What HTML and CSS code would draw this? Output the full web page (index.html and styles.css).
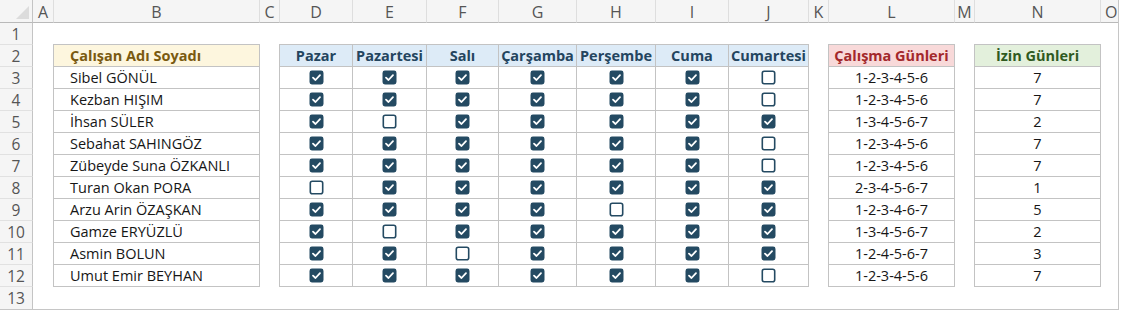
FILE: index.html
```html
<!DOCTYPE html>
<html lang="tr">
<head>
<meta charset="utf-8">
<title>Çalışma Günleri</title>
<link rel="stylesheet" href="styles.css">
</head>
<body>
<svg class="defs" width="0" height="0" aria-hidden="true">
  <symbol id="on" viewBox="0 0 15 15">
    <rect x="0.5" y="0.5" width="14" height="14" rx="2.4" fill="#244a62"/>
    <path d="M4 7.7 L6.5 10 L11 5.2" fill="none" stroke="#fff" stroke-width="1.8" stroke-linecap="round" stroke-linejoin="round"/>
  </symbol>
  <symbol id="off" viewBox="0 0 15 15">
    <rect x="1.3" y="1.3" width="12.4" height="12.4" rx="2" fill="#fff" stroke="#244a62" stroke-width="1.6"/>
  </symbol>
</svg>
<div class="sheet">
  <div class="corner"><span class="tri"></span></div>
  <div class="colh">A</div><div class="colh">B</div><div class="colh">C</div><div class="colh">D</div><div class="colh">E</div><div class="colh">F</div><div class="colh">G</div><div class="colh">H</div><div class="colh">I</div><div class="colh">J</div><div class="colh">K</div><div class="colh">L</div><div class="colh">M</div><div class="colh">N</div><div class="colh last">O</div>

  <div class="rowh r1">1</div><div class="rowh r2">2</div><div class="rowh r3">3</div><div class="rowh r4">4</div><div class="rowh r5">5</div><div class="rowh r6">6</div><div class="rowh r7">7</div><div class="rowh r8">8</div><div class="rowh r9">9</div><div class="rowh r10">10</div><div class="rowh r11">11</div><div class="rowh r12">12</div><div class="rowh r13">13</div>

  <table class="tbl t-names">
    <tr><th class="h-names">Çalışan Adı Soyadı</th></tr>
    <tr><td>Sibel GÖNÜL</td></tr>
    <tr><td>Kezban HIŞIM</td></tr>
    <tr><td>İhsan SÜLER</td></tr>
    <tr><td>Sebahat SAHINGÖZ</td></tr>
    <tr><td>Zübeyde Suna ÖZKANLI</td></tr>
    <tr><td>Turan Okan PORA</td></tr>
    <tr><td>Arzu Arin ÖZAŞKAN</td></tr>
    <tr><td>Gamze ERYÜZLÜ</td></tr>
    <tr><td>Asmin BOLUN</td></tr>
    <tr><td>Umut Emir BEYHAN</td></tr>
  </table>

  <table class="tbl t-days">
    <colgroup><col class="c73"><col class="c74"><col class="c72"><col class="c78"><col class="c79"><col class="c73"><col class="c80"></colgroup>
    <tr class="h-days"><th>Pazar</th><th>Pazartesi</th><th>Salı</th><th>Çarşamba</th><th>Perşembe</th><th>Cuma</th><th>Cumartesi</th></tr>
    <tr><td><svg class="cb"><use href="#on"/></svg></td><td><svg class="cb"><use href="#on"/></svg></td><td><svg class="cb"><use href="#on"/></svg></td><td><svg class="cb"><use href="#on"/></svg></td><td><svg class="cb"><use href="#on"/></svg></td><td><svg class="cb"><use href="#on"/></svg></td><td><svg class="cb"><use href="#off"/></svg></td></tr>
    <tr><td><svg class="cb"><use href="#on"/></svg></td><td><svg class="cb"><use href="#on"/></svg></td><td><svg class="cb"><use href="#on"/></svg></td><td><svg class="cb"><use href="#on"/></svg></td><td><svg class="cb"><use href="#on"/></svg></td><td><svg class="cb"><use href="#on"/></svg></td><td><svg class="cb"><use href="#off"/></svg></td></tr>
    <tr><td><svg class="cb"><use href="#on"/></svg></td><td><svg class="cb"><use href="#off"/></svg></td><td><svg class="cb"><use href="#on"/></svg></td><td><svg class="cb"><use href="#on"/></svg></td><td><svg class="cb"><use href="#on"/></svg></td><td><svg class="cb"><use href="#on"/></svg></td><td><svg class="cb"><use href="#on"/></svg></td></tr>
    <tr><td><svg class="cb"><use href="#on"/></svg></td><td><svg class="cb"><use href="#on"/></svg></td><td><svg class="cb"><use href="#on"/></svg></td><td><svg class="cb"><use href="#on"/></svg></td><td><svg class="cb"><use href="#on"/></svg></td><td><svg class="cb"><use href="#on"/></svg></td><td><svg class="cb"><use href="#off"/></svg></td></tr>
    <tr><td><svg class="cb"><use href="#on"/></svg></td><td><svg class="cb"><use href="#on"/></svg></td><td><svg class="cb"><use href="#on"/></svg></td><td><svg class="cb"><use href="#on"/></svg></td><td><svg class="cb"><use href="#on"/></svg></td><td><svg class="cb"><use href="#on"/></svg></td><td><svg class="cb"><use href="#off"/></svg></td></tr>
    <tr><td><svg class="cb"><use href="#off"/></svg></td><td><svg class="cb"><use href="#on"/></svg></td><td><svg class="cb"><use href="#on"/></svg></td><td><svg class="cb"><use href="#on"/></svg></td><td><svg class="cb"><use href="#on"/></svg></td><td><svg class="cb"><use href="#on"/></svg></td><td><svg class="cb"><use href="#on"/></svg></td></tr>
    <tr><td><svg class="cb"><use href="#on"/></svg></td><td><svg class="cb"><use href="#on"/></svg></td><td><svg class="cb"><use href="#on"/></svg></td><td><svg class="cb"><use href="#on"/></svg></td><td><svg class="cb"><use href="#off"/></svg></td><td><svg class="cb"><use href="#on"/></svg></td><td><svg class="cb"><use href="#on"/></svg></td></tr>
    <tr><td><svg class="cb"><use href="#on"/></svg></td><td><svg class="cb"><use href="#off"/></svg></td><td><svg class="cb"><use href="#on"/></svg></td><td><svg class="cb"><use href="#on"/></svg></td><td><svg class="cb"><use href="#on"/></svg></td><td><svg class="cb"><use href="#on"/></svg></td><td><svg class="cb"><use href="#on"/></svg></td></tr>
    <tr><td><svg class="cb"><use href="#on"/></svg></td><td><svg class="cb"><use href="#on"/></svg></td><td><svg class="cb"><use href="#off"/></svg></td><td><svg class="cb"><use href="#on"/></svg></td><td><svg class="cb"><use href="#on"/></svg></td><td><svg class="cb"><use href="#on"/></svg></td><td><svg class="cb"><use href="#on"/></svg></td></tr>
    <tr><td><svg class="cb"><use href="#on"/></svg></td><td><svg class="cb"><use href="#on"/></svg></td><td><svg class="cb"><use href="#on"/></svg></td><td><svg class="cb"><use href="#on"/></svg></td><td><svg class="cb"><use href="#on"/></svg></td><td><svg class="cb"><use href="#on"/></svg></td><td><svg class="cb"><use href="#off"/></svg></td></tr>
  </table>

  <table class="tbl t-work">
    <tr><th class="h-work">Çalışma Günleri</th></tr>
    <tr><td>1-2-3-4-5-6</td></tr>
    <tr><td>1-2-3-4-5-6</td></tr>
    <tr><td>1-3-4-5-6-7</td></tr>
    <tr><td>1-2-3-4-5-6</td></tr>
    <tr><td>1-2-3-4-5-6</td></tr>
    <tr><td>2-3-4-5-6-7</td></tr>
    <tr><td>1-2-3-4-6-7</td></tr>
    <tr><td>1-3-4-5-6-7</td></tr>
    <tr><td>1-2-4-5-6-7</td></tr>
    <tr><td>1-2-3-4-5-6</td></tr>
  </table>

  <table class="tbl t-off">
    <tr><th class="h-off">İzin Günleri</th></tr>
    <tr><td>7</td></tr>
    <tr><td>7</td></tr>
    <tr><td>2</td></tr>
    <tr><td>7</td></tr>
    <tr><td>7</td></tr>
    <tr><td>1</td></tr>
    <tr><td>5</td></tr>
    <tr><td>2</td></tr>
    <tr><td>3</td></tr>
    <tr><td>7</td></tr>
  </table>
</div>
</body>
</html>
```
FILE: styles.css
```css
* { box-sizing: border-box; }
html, body { margin: 0; padding: 0; background: #fff; }
body {
  font-family: "Open Sans", "Noto Sans", sans-serif;
  color: #161616;
  width: 1122px;
  height: 310px;
  overflow: hidden;
}
.defs { position: absolute; width: 0; height: 0; overflow: hidden; }

.sheet {
  display: grid;
  grid-template-columns: 33px 21px 206px 20px 73px 74px 72px 78px 79px 73px 80px 20px 126px 20px 126px 1fr;
  grid-template-rows: 23px repeat(13, 22px);
  width: 1119px;
  height: 310px;
  border-right: 1px solid #c6c6c6;
  border-bottom: 1px solid #c6c6c6;
  background: #fff;
}

.corner {
  background: #f5f5f5;
  border-right: 1px solid #c4c4c4;
  border-bottom: 1px solid #b9b9b9;
  display: flex;
  align-items: flex-end;
  justify-content: flex-end;
  padding: 0 3px 3px 0;
}
.tri {
  width: 0; height: 0;
  border-left: 13px solid transparent;
  border-bottom: 13px solid #dcdcdc;
}

.colh {
  background: #f5f5f5;
  color: #555;
  font-size: 16px;
  display: flex;
  align-items: center;
  justify-content: center;
  border-right: 1px solid #dedede;
  border-bottom: 1px solid #b9b9b9;
  padding-top: 1px;
}
.colh.last { border-right: none; justify-content: flex-start; padding-left: 4px; }

.rowh {
  grid-column: 1;
  background: #f5f5f5;
  color: #555;
  font-size: 15.5px;
  display: flex;
  align-items: center;
  justify-content: center;
  border-right: 1px solid #c4c4c4;
  border-bottom: 1px solid #e1e1e1;
}
.r1 { grid-row: 2; } .r2 { grid-row: 3; } .r3 { grid-row: 4; } .r4 { grid-row: 5; }
.r5 { grid-row: 6; } .r6 { grid-row: 7; } .r7 { grid-row: 8; } .r8 { grid-row: 9; }
.r9 { grid-row: 10; } .r10 { grid-row: 11; } .r11 { grid-row: 12; } .r12 { grid-row: 13; }
.r13 { grid-row: 14; border-bottom: none; }

.tbl {
  border-collapse: collapse;
  table-layout: fixed;
  grid-row: 3 / 14;
  align-self: start;
  margin-top: -1px;
  margin-left: -1px;
  font-size: 14.5px;
}
.tbl th, .tbl td {
  border: 1px solid #c3c3c3;
  height: 22px;
  padding: 0;
  line-height: 20px;
  white-space: nowrap;
  overflow: hidden;
}
.tbl th { font-weight: 700; font-size: 14.5px; }

.t-names { grid-column: 3; width: 207px; }
.t-names td, .t-names th { text-align: left; padding-left: 16px; }
.h-names { background: #fdf6de; color: #7a5a10; }

.t-days { grid-column: 5 / 12; width: 530px; }
.c73 { width: 73px; } .c74 { width: 74px; } .c72 { width: 72px; }
.c78 { width: 78px; } .c79 { width: 79px; } .c80 { width: 80px; }
.h-days th { background: #ddebf7; color: #24455f; text-align: center; }
.t-days td { text-align: center; }
.cb { width: 15px; height: 15px; display: block; margin: 0 auto; }

.t-work { grid-column: 13; width: 127px; }
.t-work td, .t-work th { text-align: center; }
.h-work { background: #f8d9d9; color: #a3282b; }

.t-off { grid-column: 15; width: 127px; }
.t-off td, .t-off th { text-align: center; }
.h-off { background: #e3f0dc; color: #2f5a1f; }
```
